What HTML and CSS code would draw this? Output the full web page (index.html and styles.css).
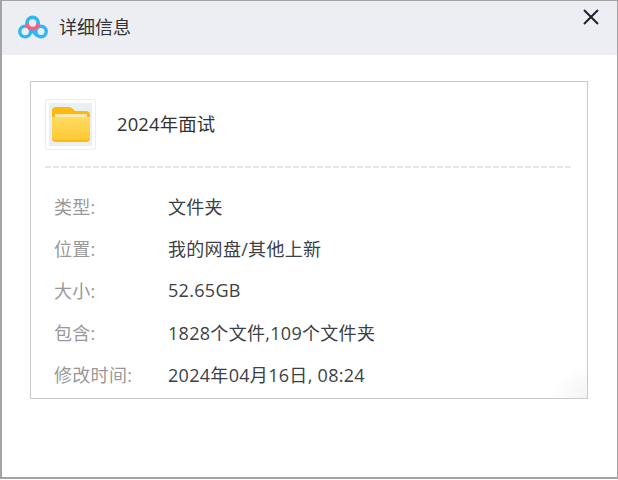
FILE: index.html
```html
<!DOCTYPE html>
<html lang="zh">
<head>
<meta charset="utf-8">
<title>详细信息</title>
<link rel="stylesheet" href="styles.css">
</head>
<body>
<div class="window">
  <header class="titlebar">
    <svg class="logo" width="32" height="26" viewBox="0 0 32 26" fill="none">
      <circle cx="8.2" cy="16.5" r="5.4" stroke="#2db7f7" stroke-width="3.4"/>
      <circle cx="24" cy="16.5" r="5.2" stroke="#2db7f7" stroke-width="3.4"/>
      <path d="M12 12.5 L20 20.5" stroke="#2db7f7" stroke-width="3.4"/>
      <path d="M10 8 A5.6 5.6 0 0 1 21.2 8" stroke="#2db7f7" stroke-width="3.6"/>
      <path d="M10 8 A5.6 5.6 0 0 0 21.2 8" stroke="#fb5f7d" stroke-width="3.8"/>
    </svg>
    <span class="title">详细信息</span>
    <button class="close" aria-label="关闭">
      <svg width="16" height="16" viewBox="0 0 16 16"><path d="M1 1 L15 15 M15 1 L1 15" stroke="#1c2230" stroke-width="2"/></svg>
    </button>
  </header>
  <main class="card">
    <div class="head">
      <div class="thumb">
        <svg width="38" height="35" viewBox="0 0 38 35">
          <defs>
            <linearGradient id="folderBody" x1="0" y1="0" x2="0" y2="1">
              <stop offset="0" stop-color="#ffdc62"/>
              <stop offset="1" stop-color="#ffc933"/>
            </linearGradient>
          </defs>
          <path d="M0 4 Q0 0 4 0 H17 Q19 0 21 2 L23 4 H34 Q38 4 38 8 V14 H0 Z" fill="#ffb80f"/>
          <path d="M3 7 H35 V10 H3 Z" fill="#ffe9ad"/>
          <path d="M0 10 H38 V31 Q38 35 34 35 H4 Q0 35 0 31 Z" fill="#ffb80f"/>
          <path d="M0 10 H38 V30 Q38 33 34 33 H4 Q0 33 0 30 Z" fill="url(#folderBody)"/>
        </svg>
      </div>
      <span class="name">2024年面试</span>
    </div>
    <dl class="rows">
      <div class="row"><dt>类型:</dt><dd>文件夹</dd></div>
      <div class="row"><dt>位置:</dt><dd>我的网盘/其他上新</dd></div>
      <div class="row"><dt>大小:</dt><dd>52.65GB</dd></div>
      <div class="row"><dt>包含:</dt><dd>1828个文件,109个文件夹</dd></div>
      <div class="row"><dt>修改时间:</dt><dd>2024年04月16日, 08:24</dd></div>
    </dl>
  </main>
</div>
</body>
</html>
```
FILE: styles.css
```css
* { box-sizing: border-box; }
html, body { margin: 0; padding: 0; background: #fff; }
body {
  width: 618px;
  height: 480px;
  font-family: "Open Sans", "Noto Sans CJK SC", sans-serif;
  font-size: 18px;
  color: #3c3f46;
}
.window {
  width: 618px;
  height: 479px;
  border: 1px solid #a3a3a3;
  border-width: 1px 1px 2px 2px;
  background: #fff;
  display: flex;
  flex-direction: column;
}
.titlebar {
  height: 54px;
  flex: none;
  background: #edeef4;
  display: flex;
  align-items: center;
  padding: 0 0 0 15px;
  position: relative;
}
.logo { flex: none; margin-right: 10px; }
.title { font-size: 18px; line-height: 26px; color: #333; margin-bottom: 2px; }
.close {
  position: absolute;
  top: 8px;
  right: 18px;
  width: 16px;
  height: 16px;
  padding: 0;
  border: 0;
  background: none;
  display: block;
}
.close svg { display: block; }
.card {
  margin: 26px 29px 0 28px;
  height: 318px;
  border: 1px solid #c9c9c9;
  padding: 17px 15px 0 14px;
  background: radial-gradient(circle at 100% 100%, #f3f3f3 0, #fff 34px);
}
.head {
  height: 69px;
  background: repeating-linear-gradient(90deg, #dfe8f0 0 6px, transparent 6px 8px) left bottom / 100% 2px no-repeat;
  display: flex;
  align-items: flex-start;
}
.thumb {
  width: 51px;
  height: 51px;
  border: 1px solid #eeeeee;
  border-radius: 2px;
  padding: 3px;
  flex: none;
  background: #fff;
  display: flex;
  align-items: center;
  justify-content: center;
  box-shadow: inset 0 0 0 3px #fff, inset 0 0 0 60px #e9f0f4;
}
.name { margin-left: 21px; line-height: 49px; font-size: 18.4px; letter-spacing: 0.15px; color: #333; }
.rows { margin: 17px 0 0 9px; padding: 0; }
.row { display: flex; height: 42px; align-items: center; letter-spacing: 0.3px; }
dt { width: 114px; flex: none; color: #999; font-size: 18px; }
dd { margin: 0; font-size: 18px; color: #3c3f46; white-space: nowrap; }
```
